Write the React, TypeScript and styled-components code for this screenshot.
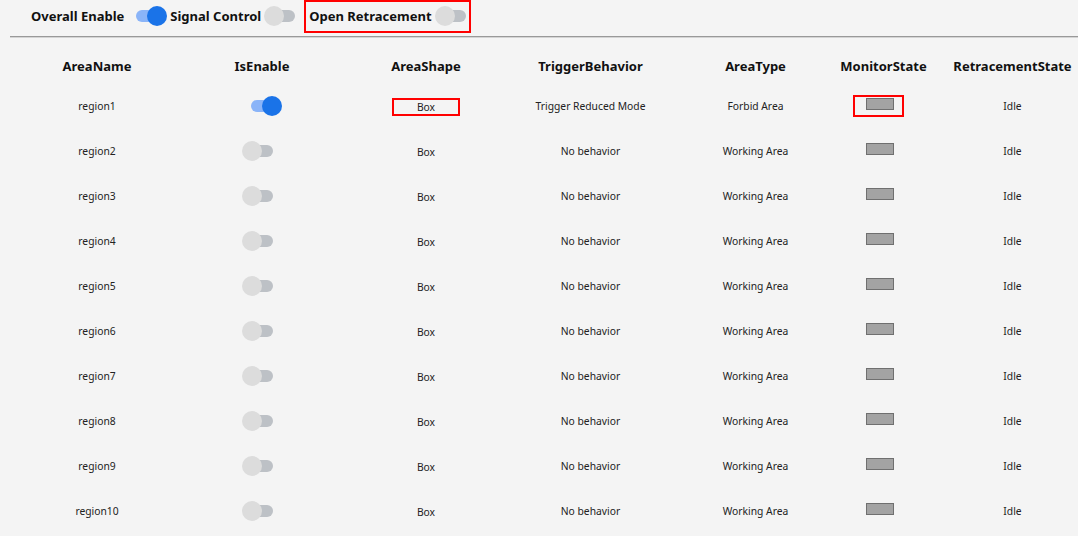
import styled, { createGlobalStyle } from "styled-components";

const GlobalStyle = createGlobalStyle`
  html, body {
    margin: 0;
    padding: 0;
    background: #f4f4f4;
    overflow: hidden;
  }
  body {
    font-family: "Noto Sans", "Open Sans", sans-serif;
    color: #1c1c1c;
  }
`;

const Page = styled.div`
  width: 1078px;
  height: 536px;
  background: #f4f4f4;
  overflow: hidden;
`;

const TopBar = styled.div`
  display: flex;
  align-items: center;
  height: 32px;
  padding-left: 31px;
  gap: 3px;
`;

const BarLabel = styled.span`
  font-size: 13px;
  font-weight: 700;
  color: #111;
  white-space: nowrap;
`;

const Marked = styled.div`
  position: relative;
  display: flex;
  align-items: center;
  gap: 3px;
  margin-left: 2px;

  &::after {
    content: "";
    position: absolute;
    left: -5px;
    right: 4px;
    top: -6px;
    bottom: -7px;
    border: 2px solid #f00;
  }
`;

const Divider = styled.div`
  margin: 4px 0 0 10px;
  height: 1px;
  background: #999;
  border-bottom: 1px solid #d4d4d4;
`;

const SwitchBox = styled.span<{ $on: boolean }>`
  position: relative;
  display: inline-block;
  width: 40px;
  height: 20px;
  flex: none;

  &::before {
    content: "";
    position: absolute;
    left: 9px;
    top: 4px;
    width: 22px;
    height: 12px;
    border-radius: 6px;
    background: ${(p) => (p.$on ? "#8ab4f8" : "#bdc1c6")};
  }

  &::after {
    content: "";
    position: absolute;
    top: 0;
    left: ${(p) => (p.$on ? "20px" : "0")};
    width: 20px;
    height: 20px;
    border-radius: 50%;
    background: ${(p) => (p.$on ? "#1a73e8" : "#dcdcdc")};
  }
`;

const Table = styled.div`
  margin: 10px 0 0 15px;
  display: grid;
  grid-template-columns: 164px 166px 162px 167px 163px 93px 165px;
  grid-template-rows: 35px;
  grid-auto-rows: 45px;
  width: 1080px;
`;

const HeadCell = styled.div`
  display: flex;
  align-items: center;
  justify-content: center;
  font-size: 13px;
  font-weight: 700;
  color: #111;
  white-space: nowrap;
`;

const Cell = styled.div`
  display: flex;
  align-items: center;
  justify-content: center;
  font-size: 10.3px;
  color: #222;
  white-space: nowrap;
`;

const ShapeTag = styled.span<{ $marked: boolean }>`
  display: inline-flex;
  align-items: center;
  justify-content: center;
  box-sizing: border-box;
  width: 68px;
  height: 18px;
  margin-top: 3px;
  border: 2px solid ${(p) => (p.$marked ? "#f00" : "transparent")};
`;

const MonitorFrame = styled.span<{ $marked: boolean }>`
  display: inline-flex;
  align-items: center;
  justify-content: center;
  box-sizing: border-box;
  width: 51px;
  height: 22px;
  padding-left: 3px;
  margin-left: -10px;
  border: 2px solid ${(p) => (p.$marked ? "#f00" : "transparent")};
`;

const Lamp = styled.span`
  display: block;
  width: 28px;
  height: 12px;
  box-sizing: border-box;
  background: #a3a3a3;
  border: 1px solid #6f6f6f;
  margin-top: -3px;
`;

type Region = {
  name: string;
  enabled: boolean;
  behavior: string;
  type: string;
};

const regions: Region[] = Array.from({ length: 10 }, (_, i) => ({
  name: `region${i + 1}`,
  enabled: i === 0,
  behavior: i === 0 ? "Trigger Reduced Mode" : "No behavior",
  type: i === 0 ? "Forbid Area" : "Working Area",
}));

const headers = [
  "AreaName",
  "IsEnable",
  "AreaShape",
  "TriggerBehavior",
  "AreaType",
  "MonitorState",
  "RetracementState",
];

export default function App() {
  return (
    <Page>
      <GlobalStyle />
      <TopBar>
        <BarLabel>Overall Enable</BarLabel>
        <SwitchBox $on />
        <BarLabel>Signal Control</BarLabel>
        <SwitchBox $on={false} />
        <Marked>
          <BarLabel>Open Retracement</BarLabel>
          <SwitchBox $on={false} />
        </Marked>
      </TopBar>
      <Divider />
      <Table>
        {headers.map((h) => (
          <HeadCell key={h}>{h}</HeadCell>
        ))}
        {regions.map((r, i) => (
          <Row key={r.name} region={r} first={i === 0} />
        ))}
      </Table>
    </Page>
  );
}

function Row({ region, first }: { region: Region; first: boolean }) {
  return (
    <>
      <Cell>{region.name}</Cell>
      <Cell>
        <SwitchBox $on={region.enabled} />
      </Cell>
      <Cell>
        <ShapeTag $marked={first}>Box</ShapeTag>
      </Cell>
      <Cell>{region.behavior}</Cell>
      <Cell>{region.type}</Cell>
      <Cell>
        <MonitorFrame $marked={first}>
          <Lamp />
        </MonitorFrame>
      </Cell>
      <Cell>Idle</Cell>
    </>
  );
}
